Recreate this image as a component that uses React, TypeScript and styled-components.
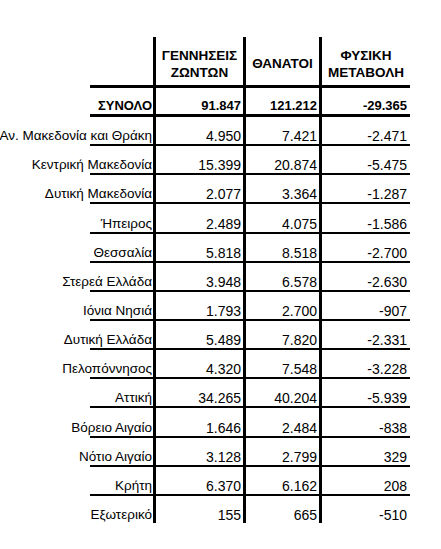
import React from "react";
import styled, { createGlobalStyle } from "styled-components";

type RowKind = "data" | "total" | "last";

type Region = {
    name: string;
    births: string;
    deaths: string;
    change: string;
};

const regions: Region[] = [
    { name: "Αν. Μακεδονία και Θράκη", births: "4.950", deaths: "7.421", change: "-2.471" },
    { name: "Κεντρική Μακεδονία", births: "15.399", deaths: "20.874", change: "-5.475" },
    { name: "Δυτική Μακεδονία", births: "2.077", deaths: "3.364", change: "-1.287" },
    { name: "Ήπειρος", births: "2.489", deaths: "4.075", change: "-1.586" },
    { name: "Θεσσαλία", births: "5.818", deaths: "8.518", change: "-2.700" },
    { name: "Στερεά Ελλάδα", births: "3.948", deaths: "6.578", change: "-2.630" },
    { name: "Ιόνια Νησιά", births: "1.793", deaths: "2.700", change: "-907" },
    { name: "Δυτική Ελλάδα", births: "5.489", deaths: "7.820", change: "-2.331" },
    { name: "Πελοπόννησος", births: "4.320", deaths: "7.548", change: "-3.228" },
    { name: "Αττική", births: "34.265", deaths: "40.204", change: "-5.939" },
    { name: "Βόρειο Αιγαίο", births: "1.646", deaths: "2.484", change: "-838" },
    { name: "Νότιο Αιγαίο", births: "3.128", deaths: "2.799", change: "329" },
    { name: "Κρήτη", births: "6.370", deaths: "6.162", change: "208" },
    { name: "Εξωτερικό", births: "155", deaths: "665", change: "-510" },
];

const App: React.FC = () => {
    return (
        <>
            <GlobalStyle />
            <Page>
                <Table>
                    <HeaderRow>
                        <HeadCell />
                        <HeadCell>ΓΕΝΝΗΣΕΙΣ<br />ΖΩΝΤΩΝ</HeadCell>
                        <HeadCell>ΘΑΝΑΤΟΙ</HeadCell>
                        <HeadCell>ΦΥΣΙΚΗ<br />ΜΕΤΑΒΟΛΗ</HeadCell>
                    </HeaderRow>
                    <Row kind="total">
                        <LabelCell bold>ΣΥΝΟΛΟ</LabelCell>
                        <NumCell bold>91.847</NumCell>
                        <NumCell bold>121.212</NumCell>
                        <NumCell bold last>-29.365</NumCell>
                    </Row>
                    {regions.map((r, i) => (
                        <Row key={r.name} kind={i === regions.length - 1 ? "last" : "data"}>
                            <LabelCell>{r.name}</LabelCell>
                            <NumCell>{r.births}</NumCell>
                            <NumCell>{r.deaths}</NumCell>
                            <NumCell last>{r.change}</NumCell>
                        </Row>
                    ))}
                </Table>
            </Page>
        </>
    );
};

const GlobalStyle = createGlobalStyle`
    html, body {
        margin: 0;
        background: #ffffff;
    }
    body {
        font-family: "Liberation Sans", Arial, sans-serif;
        color: #000000;
    }
`;

const Page = styled.div`
    width: 441px;
    height: 549px;
    box-sizing: border-box;
    padding: 37px 0 0 90px;
`;

const Table = styled.div`
    display: flex;
    flex-direction: column;
    width: 320px;
`;

const columns = "66px 90px 76px 88px";

const HeaderRow = styled.div`
    display: grid;
    grid-template-columns: ${columns};
    height: 51px;
    box-sizing: border-box;
    border-bottom: 3px solid #000;
`;

const HeadCell = styled.div`
    display: flex;
    align-items: center;
    justify-content: center;
    box-sizing: border-box;
    padding-top: 5px;
    border-right: 3px solid #000;
    font-size: 13.5px;
    font-weight: 700;
    line-height: 17px;
    text-align: center;

    &:last-child {
        border-right: none;
    }
`;

const Row = styled.div<{ kind: RowKind }>`
    display: grid;
    grid-template-columns: ${columns};
    box-sizing: border-box;
    height: ${(p) => (p.kind === "total" ? "29px" : p.kind === "last" ? "27px" : "29.15px")};
    border-bottom: ${(p) => (p.kind === "total" ? "3px" : p.kind === "last" ? "0" : "2px")} solid #000;
`;

const Cell = styled.div<{ bold?: boolean }>`
    display: flex;
    align-items: flex-end;
    justify-content: flex-end;
    box-sizing: border-box;
    white-space: nowrap;
    font-size: ${(p) => (p.bold ? "13px" : "14px")};
    font-weight: ${(p) => (p.bold ? 700 : 400)};
    line-height: 16px;
`;

const LabelCell = styled(Cell)`
    padding-right: 1px;
    border-right: 3px solid #000;
    font-size: ${(p) => (p.bold ? "13px" : "13.5px")};
`;

const NumCell = styled(Cell)<{ last?: boolean }>`
    padding-right: ${(p) => (p.last ? "3px" : "2px")};
    border-right: ${(p) => (p.last ? "none" : "3px solid #000")};
`;

export default App;
